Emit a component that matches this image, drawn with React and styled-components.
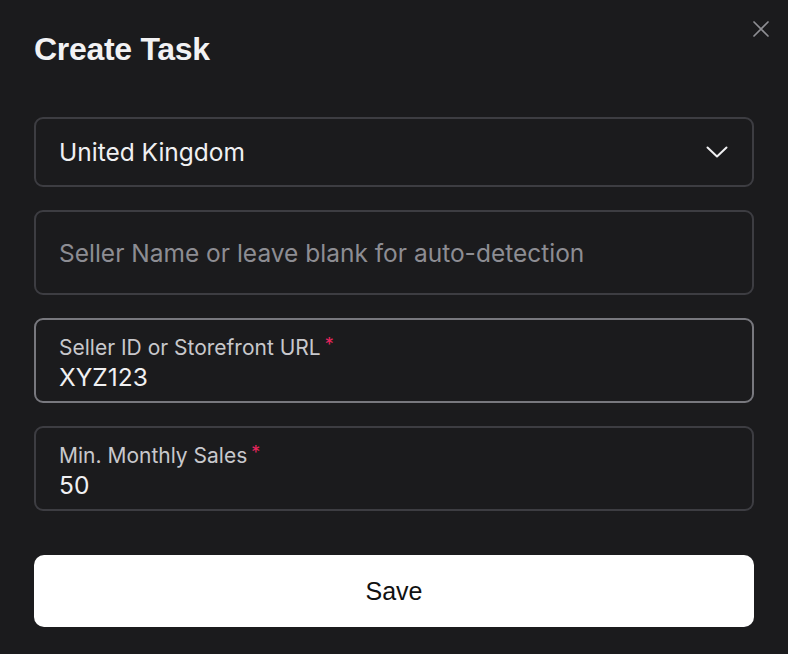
import React from "react";
import styled, { createGlobalStyle } from "styled-components";

const Global = createGlobalStyle`
  html, body { margin: 0; padding: 0; background: #1b1b1d; }
  body { font-family: Inter, "Noto Sans", sans-serif; }
  * { box-sizing: border-box; }
`;

const Dialog = styled.div`
  position: relative;
  width: 788px;
  height: 654px;
  background: #1b1b1d;
  padding: 29px 34px 0 34px;
  display: flex;
  flex-direction: column;
`;

const Title = styled.h1`
  margin: 0;
  font-family: "Liberation Sans", Arial, sans-serif;
  font-weight: 700;
  font-size: 32px;
  line-height: 40px;
  color: #f2f2f4;
  letter-spacing: -0.3px;
`;

const Close = styled.button`
  position: absolute;
  top: 18px;
  right: 16px;
  width: 22px;
  height: 22px;
  padding: 0;
  border: 0;
  background: transparent;
  display: flex;
  align-items: center;
  justify-content: center;
  cursor: pointer;
`;

const Form = styled.div`
  margin-top: 48px;
  display: flex;
  flex-direction: column;
  gap: 23px;
`;

const Box = styled.div`
  height: ${(p) => (p.$tall ? 85 : 70)}px;
  border: 2px solid ${(p) => (p.$focused ? "#78787e" : "#3d3d42")};
  border-radius: 9px;
  padding: ${(p) => (p.$labeled ? "4px" : "0")} 24px 0 23px;
  display: flex;
  align-items: center;
  justify-content: space-between;
`;

const Stack = styled.div`
  display: flex;
  flex-direction: column;
`;

const Value = styled.span`
  font-size: 24.5px;
  line-height: 30px;
  color: ${(p) => (p.$placeholder ? "#8d8d93" : "#f0f0f2")};
`;

const Label = styled.span`
  font-size: 21px;
  line-height: 28px;
  color: #c8c8cc;
  display: flex;
  align-items: flex-start;
`;

const Req = styled.span`
  color: #e8265e;
  margin-left: 4px;
  font-size: 18px;
  line-height: 22px;
`;

const SaveButton = styled.button`
  margin-top: 44px;
  height: 72px;
  width: 100%;
  background: #ffffff;
  border: 0;
  border-radius: 10px;
  font-family: "Liberation Sans", Arial, sans-serif;
  font-size: 25px;
  color: #111;
  cursor: pointer;
`;

const LabeledField = ({ label, value, focused }) => (
  <Box $tall $labeled $focused={focused}>
    <Stack>
      <Label>
        {label}
        <Req>*</Req>
      </Label>
      <Value>{value}</Value>
    </Stack>
  </Box>
);

export default function App() {
  return (
    <>
      <Global />
      <Dialog>
        <Title>Create Task</Title>
        <Close aria-label="Close">
          <svg width="16" height="16" viewBox="0 0 16 16">
            <path d="M1 1 L15 15 M15 1 L1 15" stroke="#8e8e93" strokeWidth="1.7" strokeLinecap="round" />
          </svg>
        </Close>
        <Form>
          <Box>
            <Value>United Kingdom</Value>
            <svg width="22" height="12" viewBox="0 0 22 12">
              <path d="M1.5 1.5 L11 10.5 L20.5 1.5" fill="none" stroke="#f0f0f2" strokeWidth="2" strokeLinecap="round" strokeLinejoin="round" />
            </svg>
          </Box>
          <Box $tall>
            <Value $placeholder>Seller Name or leave blank for auto-detection</Value>
          </Box>
          <LabeledField label="Seller ID or Storefront URL" value="XYZ123" focused />
          <LabeledField label="Min. Monthly Sales" value="50" />
        </Form>
        <SaveButton>Save</SaveButton>
      </Dialog>
    </>
  );
}
